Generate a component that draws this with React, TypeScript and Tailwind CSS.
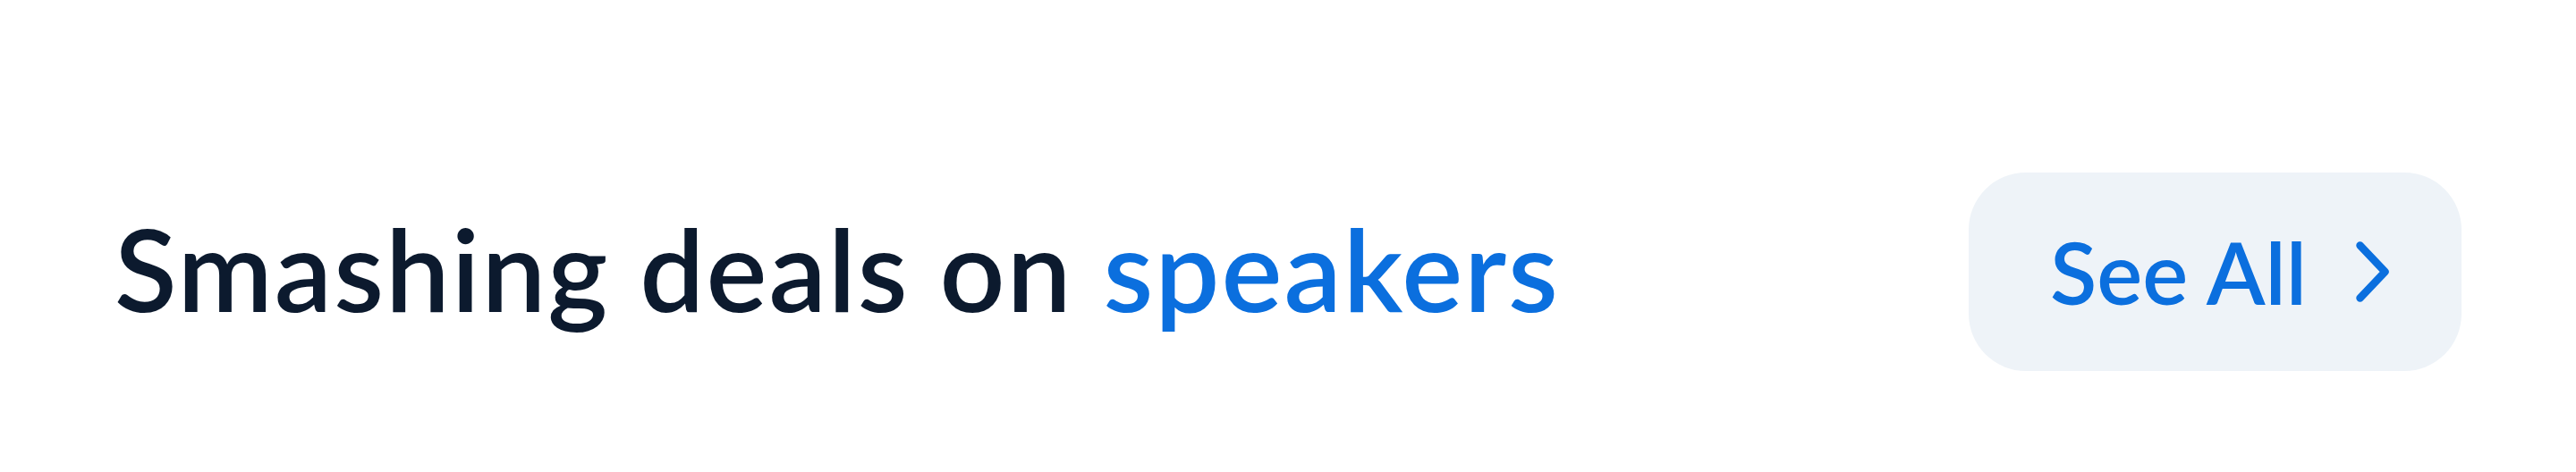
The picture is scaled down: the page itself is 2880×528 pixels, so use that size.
import React from 'react'

function ChevronRight() {
  return (
    <svg viewBox="0 0 37 68" className="ml-auto w-[37px] h-[68px] shrink-0" fill="none">
      <path
        d="M4.5 4.5 L32.5 34 L4.5 63.5"
        stroke="currentColor"
        strokeWidth="8.5"
        strokeLinecap="round"
        strokeLinejoin="round"
      />
    </svg>
  )
}

export default function App() {
  return (
    <div className="w-full h-[528px] bg-white pt-[80px] px-[128px] flex items-center justify-between font-['Lato','Liberation_Sans',sans-serif]">
      <h2 className="mb-[8px] text-[128px] leading-none font-semibold text-[#0c1a2e] tracking-[2px]">
        Smashing deals on <span className="text-[#0b6fde]">speakers</span>
      </h2>
      <button className="shrink-0 h-[222px] w-[551px] rounded-[64px] bg-[#eef3f8] flex items-center pl-[91px] pr-[81px] text-[#0b6fde]">
        <span className="text-[96px] leading-none font-semibold">See All</span>
        <ChevronRight />
      </button>
    </div>
  )
}
